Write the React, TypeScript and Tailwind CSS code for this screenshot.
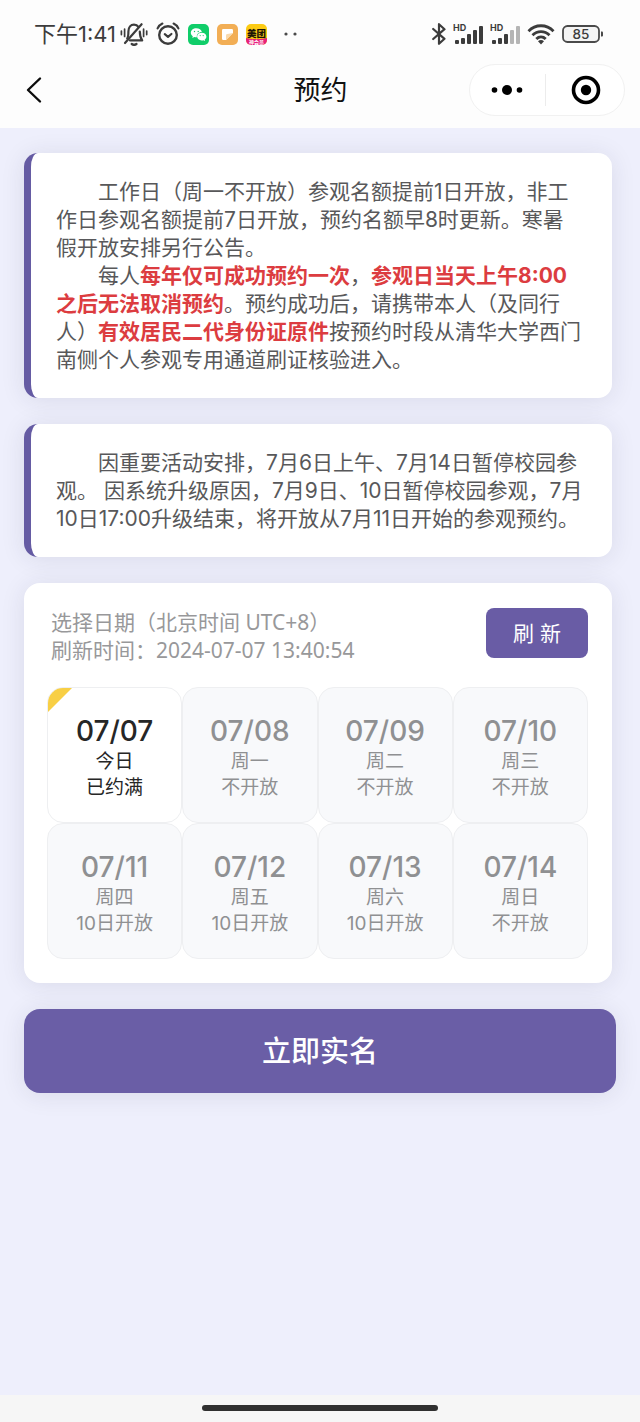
import React from "react";

type Day = {
  date: string;
  weekday: string;
  status: string;
  today?: boolean;
};

const days: Day[] = [
  { date: "07/07", weekday: "今日", status: "已约满", today: true },
  { date: "07/08", weekday: "周一", status: "不开放" },
  { date: "07/09", weekday: "周二", status: "不开放" },
  { date: "07/10", weekday: "周三", status: "不开放" },
  { date: "07/11", weekday: "周四", status: "10日开放" },
  { date: "07/12", weekday: "周五", status: "10日开放" },
  { date: "07/13", weekday: "周六", status: "10日开放" },
  { date: "07/14", weekday: "周日", status: "不开放" },
];

function MutedBellIcon() {
  return (
    <svg width="28" height="24" viewBox="0 0 28 24" fill="none" stroke="#3c3c3c" strokeWidth="2.2" strokeLinecap="round" strokeLinejoin="round">
      <path d="M7.2 16.5C8.4 15 8.4 13 8.400 9.500 8.400 5.200 10.800 2.600 14 2.600c1.900 0 3.500.8 4.400 2.200" />
      <path d="M19.800 9.500c0 4 .3 6 2.400 8.900H10" />
      <path d="M21.600 2.200 5 21" />
      <path d="M11.800 22c1.400 1 3.200 1 4.600 0" strokeWidth="2.400" />
      <path d="M1.400 9v3.600M4.600 7.200v7.200M23.600 7.200v7.200M26.700 9v3.600" strokeWidth="1.700" />
    </svg>
  );
}

function AlarmIcon() {
  return (
    <svg width="24" height="24" viewBox="0 0 24 24" fill="none" stroke="#3c3c3c" strokeWidth="2.4" strokeLinecap="round" strokeLinejoin="round">
      <circle cx="12" cy="13" r="8.8" />
      <path d="M8.8 12.2 12 14.8l3.4-2.8" strokeWidth="2.2" />
      <path d="M1.6 6.4C2.6 4.2 4.2 2.6 6.4 1.6M22.4 6.4c-1-2.2-2.6-3.8-4.8-4.8" strokeWidth="2.2" />
    </svg>
  );
}

function WechatIcon() {
  return (
    <svg width="21" height="21" viewBox="0 0 21 21">
      <rect width="21" height="21" rx="5" fill="#10cd69" />
      <path d="M8.3 4.2c-3.1 0-5.5 2-5.5 4.6 0 1.4.8 2.7 2 3.5l-.5 1.7 2-1c.9.3 1.6.3 2.6.3-.6-3 1.9-5.3 5-5.3-.5-2.2-2.800-3.800-5.600-3.800Z" fill="#fff" />
      <path d="M13.700 8.700c-2.700 0-4.600 1.700-4.600 3.900s2 3.900 4.600 3.900c.6 0 1.200-.1 1.700-.3l1.700.9-.4-1.500c1-.7 1.700-1.800 1.700-3 0-2.200-2.100-3.900-4.700-3.900Z" fill="#fff" />
      <g fill="#10cd69">
        <circle cx="6.500" cy="7.500" r=".7" />
        <circle cx="10.200" cy="7.500" r=".7" />
        <circle cx="12.200" cy="11.600" r=".6" />
        <circle cx="15.200" cy="11.600" r=".6" />
      </g>
    </svg>
  );
}

function NoteIcon() {
  return (
    <svg width="21" height="21" viewBox="0 0 21 21">
      <rect width="21" height="21" rx="5" fill="#f2ae55" />
      <path d="M5 6.200A1.200 1.200 0 0 1 6.200 5h8.600A1.200 1.200 0 0 1 16 6.200V9l-7 7H6.200A1.200 1.200 0 0 1 5 14.800Z" fill="#fff" />
      <path d="M16 9 9 16v-4.600A1.400 1.400 0 0 1 10.400 10Z" fill="#f9d9ac" />
    </svg>
  );
}

function MeituanIcon() {
  return (
    <svg width="21" height="21" viewBox="0 0 21 21">
      <defs>
        <clipPath id="meituan-tile">
          <rect width="21" height="21" rx="5" />
        </clipPath>
      </defs>
      <g clipPath="url(#meituan-tile)">
        <rect width="21" height="21" fill="#fccb14" />
        <path d="M0 14c6 1.500 15 1.500 21 0v7H0Z" fill="#e8207c" />
        <text x="10.500" y="12.500" textAnchor="middle" fontSize="9.500" fontWeight="900" fill="#1d1405">美团</text>
        <text x="10.500" y="20" textAnchor="middle" fontSize="5" fontWeight="700" fill="#fff">神会员</text>
      </g>
    </svg>
  );
}

function BluetoothIcon() {
  return (
    <svg width="14" height="24" viewBox="0 0 14 24" fill="none" stroke="#3c3c3c" strokeWidth="2.2" strokeLinejoin="round" strokeLinecap="round">
      <path d="M1.200 7 12.500 16.800 7 21.800V2.200l5.500 5L1.200 17" />
    </svg>
  );
}

function SignalIcon({ level }: { level: number }) {
  const bars = [4, 6, 10, 14, 18];
  return (
    <svg width="30" height="22" viewBox="0 0 30 22">
      <text x="0" y="8" fontSize="9" fontWeight="700" fill="#3c3c3c">HD</text>
      {bars.map((h, i) => (
        <rect key={h} x={2 + i * 6} y={21 - h} width="4" height={h} rx="1" fill={i < level ? "#3c3c3c" : "#b5b5b5"} />
      ))}
    </svg>
  );
}

function WifiIcon() {
  return (
    <svg width="28" height="22" viewBox="0 0 28 22" fill="none" stroke="#3c3c3c" strokeWidth="2.800">
      <path d="M1.500 8.200C8.500.9 19.500.9 26.500 8.200" />
      <path d="M5.500 12.200c4.800-4.900 12.200-4.900 17 0" />
      <path d="M9.300 16c2.700-2.700 6.700-2.700 9.400 0" />
      <path d="M11 18.300c1.700-1.700 4.300-1.700 6 0L14 21.500Z" fill="#3c3c3c" stroke="none" />
    </svg>
  );
}

function BatteryIcon() {
  return (
    <svg width="42" height="20" viewBox="0 0 42 20">
      <rect x="1" y="2" width="36" height="16" rx="4.500" fill="#f4f4f4" stroke="#4a4a4a" strokeWidth="1.800" />
      <path d="M39 7.500h1a1 1 0 0 1 1 1v3a1 1 0 0 1-1 1h-1Z" fill="#4a4a4a" />
      <text x="19" y="15" textAnchor="middle" fontSize="13.500" fontWeight="500" fill="#3c3c3c">85</text>
    </svg>
  );
}

function StatusBar() {
  return (
    <div className="flex h-16 items-center justify-between pt-1 pr-9 pl-[34px]">
      <div className="flex items-center gap-2">
        <span className="-mr-1 text-[22px] leading-7 text-[#3c3c3c]">下午1:41</span>
        <MutedBellIcon />
        <AlarmIcon />
        <WechatIcon />
        <NoteIcon />
        <MeituanIcon />
        <svg className="ml-2" width="16" height="4" viewBox="0 0 16 4" fill="#4a4a4a">
          <circle cx="3" cy="2" r="1.600" />
          <circle cx="12" cy="2" r="1.600" />
        </svg>
      </div>
      <div className="flex items-center gap-[7px]">
        <BluetoothIcon />
        <SignalIcon level={5} />
        <SignalIcon level={3} />
        <WifiIcon />
        <BatteryIcon />
      </div>
    </div>
  );
}

function NavBar() {
  return (
    <div className="grid h-16 grid-cols-3 items-center pr-[15px] pb-3 pl-6">
      <button type="button" aria-label="返回" className="justify-self-start">
        <svg width="20" height="28" viewBox="0 0 20 28" fill="none" stroke="#0c0c0c" strokeWidth="2.400" strokeLinecap="round" strokeLinejoin="round">
          <path d="M16 2.500 4 14l12 11.500" />
        </svg>
      </button>
      <h1 className="pt-px pr-2 text-center text-[27px] leading-9 text-[#111]">预约</h1>
      <div className="flex h-[52px] w-[156px] items-center justify-self-end rounded-full border border-[#f1f1f1] bg-white">
        <button type="button" aria-label="更多" className="flex flex-1 justify-center">
          <svg width="32" height="12" viewBox="0 0 32 12">
            <circle cx="3.500" cy="6" r="2.800" />
            <circle cx="16" cy="6" r="5" />
            <circle cx="28.500" cy="6" r="2.800" />
          </svg>
        </button>
        <span className="h-8 w-px bg-[#ececec]" />
        <button type="button" aria-label="关闭" className="flex flex-1 justify-center pl-[3px]">
          <svg width="30" height="30" viewBox="0 0 30 30">
            <circle cx="15" cy="15" r="12.500" fill="none" stroke="#000" strokeWidth="3.600" />
            <circle cx="15" cy="15" r="5.200" />
          </svg>
        </button>
      </div>
    </div>
  );
}

function Notice({ children }: { children: React.ReactNode }) {
  return (
    <section className="mr-1 rounded-[14px] border-l-[7px] border-[#655ba3] bg-white pt-[25px] pr-5 pb-6 pl-[25px] text-[21px] leading-7 text-[#58585a] shadow-[0_2px_24px_rgba(40,40,70,0.10)]">
      {children}
    </section>
  );
}

function DayCell({ day }: { day: Day }) {
  const tone = day.today ? "bg-white text-[#262626]" : "bg-[#f8f9fb] text-[#8f9092]";
  return (
    <button
      type="button"
      className={`relative flex h-[136px] flex-col items-center overflow-hidden rounded-[16px] border border-[#eeeff1] pt-[25px] ${tone}`}
    >
      {day.today && (
        <svg className="absolute top-0 left-0" width="24" height="24" viewBox="0 0 24 24">
          <path d="M0 0h24L0 24Z" fill="#f8cf45" />
        </svg>
      )}
      <span className="text-[28px] leading-9 font-medium">{day.date}</span>
      <span className="text-[19px] leading-[26px]">{day.weekday}</span>
      <span className="text-[19px] leading-[26px]">{day.status}</span>
    </button>
  );
}

export default function App() {
  return (
    <div className="flex min-h-screen flex-col bg-[#eeeffc] font-['Inter','Noto_Sans_CJK_SC',sans-serif]">
      <header className="bg-[#fdfdfd]">
        <StatusBar />
        <NavBar />
      </header>

      <main className="flex flex-1 flex-col gap-[26px] px-6 pt-[25px] pb-8">
        <Notice>
          <p className="indent-[42px]">
            工作日（周一不开放）参观名额提前1日开放，非工
            <br />
            作日参观名额提前7日开放，预约名额早8时更新。寒暑
            <br />
            假开放安排另行公告。
          </p>
          <p className="indent-[42px]">
            每人<strong className="font-bold text-[#dc3c40]">每年仅可成功预约一次</strong>，
            <strong className="font-bold text-[#dc3c40]">
              参观日当天上午8:00
              <br />
              之后无法取消预约
            </strong>
            。预约成功后，请携带本人（及同行
            <br />
            人）<strong className="font-bold text-[#dc3c40]">有效居民二代身份证原件</strong>按预约时段从清华大学西门
            <br />
            南侧个人参观专用通道刷证核验进入。
          </p>
        </Notice>

        <Notice>
          <p className="indent-[42px]">
            因重要活动安排，7月6日上午、7月14日暂停校园参
            <br />
            观。 因系统升级原因，7月9日、10日暂停校园参观，7月
            <br />
            10日17:00升级结束，将开放从7月11日开始的参观预约。
          </p>
        </Notice>

        <section className="mr-1 rounded-[16px] bg-white pt-[25px] pr-6 pb-6 pl-[23px] shadow-[0_2px_24px_rgba(40,40,70,0.10)]">
          <div className="flex items-start justify-between pb-[23px] pl-1">
            <div className="font-['Noto_Sans','Noto_Sans_CJK_SC',sans-serif] text-[21px] leading-7 text-[#98989a]">
              <p>选择日期（北京时间 UTC+8）</p>
              <p>刷新时间：2024-07-07 13:40:54</p>
            </div>
            <button type="button" className="h-[50px] w-[102px] rounded-lg bg-[#695ca5] pt-px text-[21px] text-white">
              刷 新
            </button>
          </div>
          <div className="grid grid-cols-4">
            {days.map((day) => (
              <DayCell key={day.date} day={day} />
            ))}
          </div>
        </section>

        <button
          type="button"
          className="h-[84px] rounded-[16px] bg-[#6a5ea6] pt-px text-[29px] font-medium text-white shadow-[0_2px_24px_rgba(40,40,70,0.10)]"
        >
          立即实名
        </button>
      </main>

      <footer className="flex h-[27px] items-center justify-center bg-[#f6f6f6] pb-px">
        <div className="h-[6px] w-[236px] rounded-full bg-[#303030]" />
      </footer>
    </div>
  );
}
